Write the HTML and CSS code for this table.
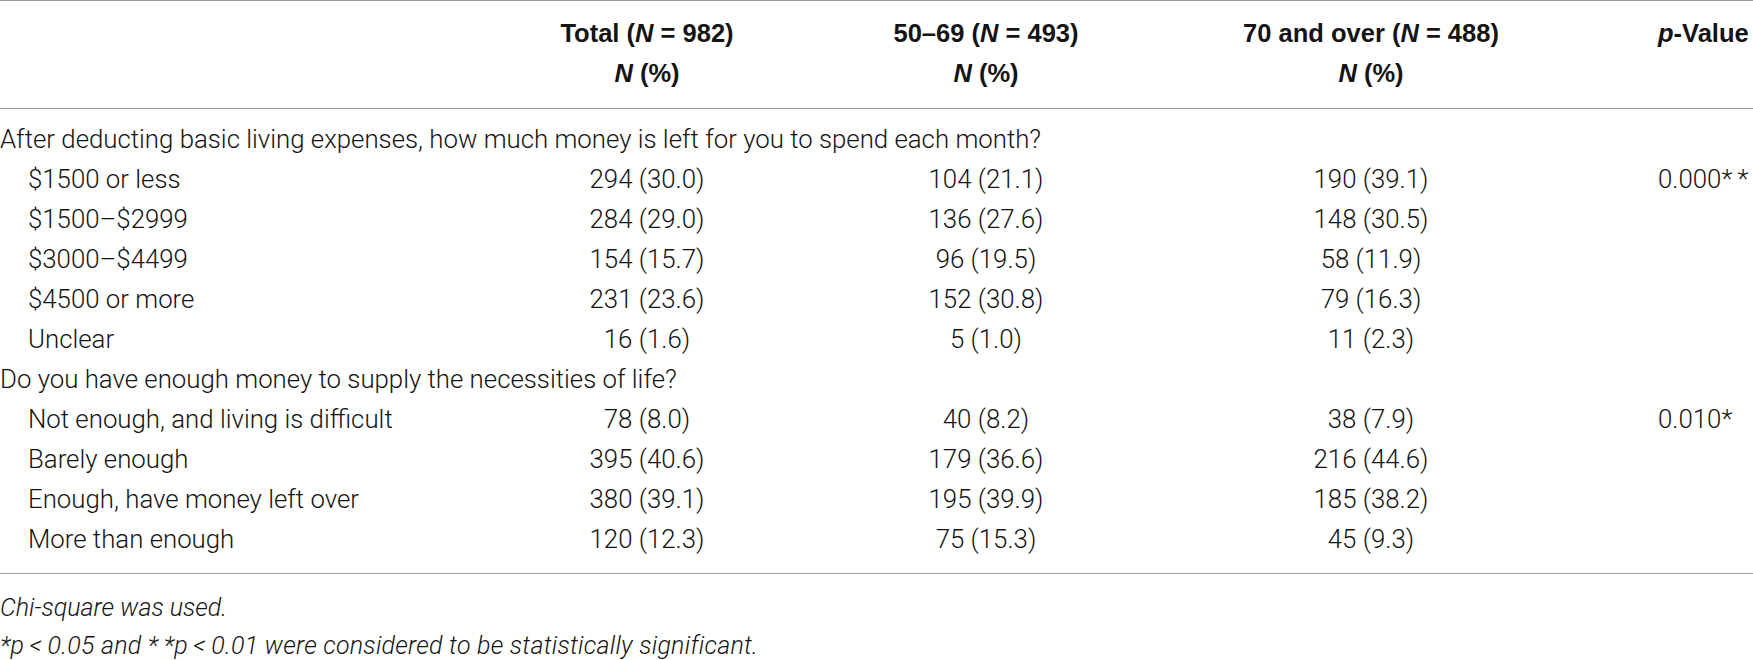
FILE: index.html
```html
<!DOCTYPE html>
<html lang="en">
<head>
<meta charset="utf-8">
<title>Table</title>
<link rel="stylesheet" href="styles.css">
</head>
<body>
<table class="data">
  <colgroup>
    <col class="c-label">
    <col class="c-total">
    <col class="c-mid">
    <col class="c-old">
    <col class="c-p">
  </colgroup>
  <thead>
    <tr>
      <th class="h-label"></th>
      <th class="h-num">Total (<i>N</i> = 982)<br><i>N</i> (%)</th>
      <th class="h-num">50–69 (<i>N</i> = 493)<br><i>N</i> (%)</th>
      <th class="h-num">70 and over (<i>N</i> = 488)<br><i>N</i> (%)</th>
      <th class="h-p"><i>p</i>-Value</th>
    </tr>
  </thead>
  <tbody>
    <tr class="first">
      <td class="group" colspan="5">After deducting basic living expenses, how much money is left for you to spend each month?</td>
    </tr>
    <tr>
      <td class="sub">$1500 or less</td>
      <td class="num">294 (30.0)</td>
      <td class="num">104 (21.1)</td>
      <td class="num">190 (39.1)</td>
      <td class="pv">0.000*&#8201;*</td>
    </tr>
    <tr>
      <td class="sub">$1500–$2999</td>
      <td class="num">284 (29.0)</td>
      <td class="num">136 (27.6)</td>
      <td class="num">148 (30.5)</td>
      <td class="pv"></td>
    </tr>
    <tr>
      <td class="sub">$3000–$4499</td>
      <td class="num">154 (15.7)</td>
      <td class="num">96 (19.5)</td>
      <td class="num">58 (11.9)</td>
      <td class="pv"></td>
    </tr>
    <tr>
      <td class="sub">$4500 or more</td>
      <td class="num">231 (23.6)</td>
      <td class="num">152 (30.8)</td>
      <td class="num">79 (16.3)</td>
      <td class="pv"></td>
    </tr>
    <tr>
      <td class="sub">Unclear</td>
      <td class="num">16 (1.6)</td>
      <td class="num">5 (1.0)</td>
      <td class="num">11 (2.3)</td>
      <td class="pv"></td>
    </tr>
    <tr>
      <td class="group" colspan="5">Do you have enough money to supply the necessities of life?</td>
    </tr>
    <tr>
      <td class="sub">Not enough, and living is difficult</td>
      <td class="num">78 (8.0)</td>
      <td class="num">40 (8.2)</td>
      <td class="num">38 (7.9)</td>
      <td class="pv">0.010*</td>
    </tr>
    <tr>
      <td class="sub">Barely enough</td>
      <td class="num">395 (40.6)</td>
      <td class="num">179 (36.6)</td>
      <td class="num">216 (44.6)</td>
      <td class="pv"></td>
    </tr>
    <tr>
      <td class="sub">Enough, have money left over</td>
      <td class="num">380 (39.1)</td>
      <td class="num">195 (39.9)</td>
      <td class="num">185 (38.2)</td>
      <td class="pv"></td>
    </tr>
    <tr class="last">
      <td class="sub">More than enough</td>
      <td class="num">120 (12.3)</td>
      <td class="num">75 (15.3)</td>
      <td class="num">45 (9.3)</td>
      <td class="pv"></td>
    </tr>
  </tbody>
</table>
<div class="notes">
  <p class="note">Chi-square was used.</p>
  <p class="note wide">*p&#8201;&lt;&#8201;0.05 and *&#8201;*p&#8201;&lt;&#8201;0.01 were considered to be statistically significant.</p>
</div>
</body>
</html>
```

FILE: styles.css
```css
html, body {
  margin: 0;
  padding: 0;
  background: #ffffff;
}

body {
  width: 1753px;
  overflow: hidden;
  color: #141414;
  font-family: Roboto, "Liberation Sans", sans-serif;
  font-weight: 300;
  font-size: 25.8px;
}

.data {
  width: 1753px;
  table-layout: fixed;
  border-collapse: collapse;
  border-top: 1px solid #9d9d9d;
  border-bottom: 1px solid #9d9d9d;
}

.c-label { width: 490px; }
.c-total { width: 314px; }
.c-mid { width: 364px; }
.c-old { width: 406px; }
.c-p { width: 179px; }

.data th,
.data td {
  padding: 0;
  line-height: 40px;
  white-space: nowrap;
  vertical-align: top;
}

.data thead th {
  font-family: "Liberation Sans", Arial, sans-serif;
  font-weight: 700;
  font-size: 25.5px;
  padding-top: 12px;
  padding-bottom: 15px;
  border-bottom: 1px solid #9d9d9d;
}

.h-num {
  text-align: center;
}

.h-p,
.pv {
  text-align: left;
  padding-left: 84px !important;
}

.data tbody tr.first td {
  padding-top: 10px;
}

.data tbody tr.last td {
  padding-bottom: 14px;
}

.group {
  text-align: left;
  padding-left: 0;
}

.sub {
  text-align: left;
  padding-left: 28px !important;
}

.num {
  text-align: center;
}

.notes {
  padding-top: 15px;
}

.note {
  margin: 0;
  font-style: italic;
  line-height: 38px;
  font-size: 25px;
}

.note.wide {
  letter-spacing: 0.25px;
}
```
